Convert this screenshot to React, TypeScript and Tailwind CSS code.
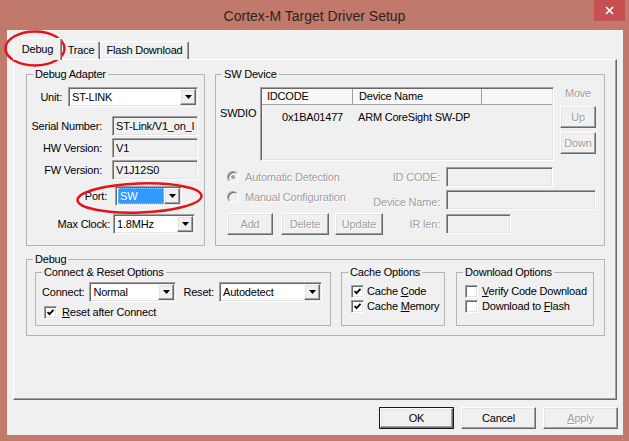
import React from 'react';

const sunken =
  'border border-t-[#a0a0a0] border-l-[#a0a0a0] border-b-white border-r-white shadow-[inset_1px_1px_0_#696969,inset_-1px_-1px_0_#e3e3e3]';
const raised =
  'border border-t-white border-l-white border-b-[#696969] border-r-[#696969] shadow-[inset_-1px_-1px_0_#a0a0a0,inset_1px_1px_0_#e3e3e3]';
const dim = 'text-[#a0a0a0] [text-shadow:1px_1px_0_#fff]';
const group = 'border border-[#b4b4b4] m-0 p-0 min-w-0';
const legend = 'ml-[6px] px-[2px] leading-[13px]';

function Arrow() {
  return (
    <svg width="7" height="4" viewBox="0 0 7 4">
      <path d="M0 0h7L3.5 4z" fill="#000" />
    </svg>
  );
}

function Combo({ w, value, selected }: { w: string; value: string; selected?: boolean }) {
  return (
    <div className={`${sunken} ${w} flex h-[20px] bg-white p-[1px]`}>
      <div className="flex flex-1 items-center overflow-hidden pl-[1px]">
        {selected ? (
          <span className="flex h-full w-full items-center bg-[#3399ff] pl-[2px] text-white outline outline-1 outline-dotted outline-[#f0c060] -outline-offset-1">
            {value}
          </span>
        ) : (
          <span className="pl-[1px]">{value}</span>
        )}
      </div>
      <div className={`${raised} flex w-[16px] items-center justify-center bg-[#f0f0f0]`}>
        <Arrow />
      </div>
    </div>
  );
}

function Field({ w, value }: { w: string; value?: string }) {
  return (
    <div className={`${sunken} ${w} flex h-[20px] items-center overflow-hidden whitespace-nowrap bg-[#f0f0f0] pl-[3px]`}>
      {value}
    </div>
  );
}

function Button({ w, children, disabled, def }: { w: string; children: React.ReactNode; disabled?: boolean; def?: boolean }) {
  return (
    <div className={`${w} h-[22px] ${def ? 'border border-[#1a1a1a]' : ''}`}>
      <div className={`${raised} flex h-full w-full items-center justify-center bg-[#f0f0f0] ${disabled ? dim : ''}`}>
        {children}
      </div>
    </div>
  );
}

function Check({ on }: { on?: boolean }) {
  return (
    <div className={`${sunken} flex h-[13px] w-[13px] shrink-0 items-center justify-center bg-white`}>
      {on && (
        <svg width="9" height="9" viewBox="0 0 9 9">
          <path d="M1.5 4l2 2.2L7.5 1.8" stroke="#000" strokeWidth="1.8" fill="none" />
        </svg>
      )}
    </div>
  );
}

function Radio({ on, label }: { on?: boolean; label: string }) {
  return (
    <div className="flex items-center">
      <div className="flex h-[12px] w-[12px] items-center justify-center rounded-full border border-t-[#a0a0a0] border-l-[#a0a0a0] border-b-white border-r-white bg-[#f0f0f0] shadow-[inset_1px_1px_0_#696969]">
        {on && <div className="h-[4px] w-[4px] rounded-full bg-[#a0a0a0]" />}
      </div>
      <span className={`ml-[6px] ${dim}`}>{label}</span>
    </div>
  );
}

function Row({ label, lw, gap, children, mt }: { label: string; lw: string; gap: string; children: React.ReactNode; mt: string }) {
  return (
    <div className={`flex h-[20px] items-center ${mt}`}>
      <span className={`${lw} text-right`}>{label}</span>
      <div className={gap}>{children}</div>
    </div>
  );
}

export default function App() {
  return (
    <div className="relative flex h-[441px] w-[629px] flex-col bg-[#c1796b] font-['Liberation_Sans',Arial,sans-serif] text-[11px] tracking-[-0.2px] text-black">
      {/* title bar */}
      <div className="grid h-[30px] grid-cols-[1fr_auto_1fr]">
        <div />
        <div className="self-center pt-[2px] font-['Liberation_Sans',sans-serif] text-[14px] tracking-normal text-[#2e2420]">
          Cortex-M Target Driver Setup
        </div>
        <div className="flex justify-end pr-[4px]">
          <div className="flex h-[21px] w-[31px] items-center justify-center bg-[#c75050]">
            <svg width="9" height="9" viewBox="0 0 9 9">
              <path d="M1 1l7 7M8 1L1 8" stroke="#fff" strokeWidth="1.7" />
            </svg>
          </div>
        </div>
      </div>

      {/* client */}
      <div className="mb-[6px] ml-[7px] mr-[6px] flex flex-col bg-[#f0f0f0] pb-[6px] pl-[6px] pr-[5px] pt-[8px]">
        {/* tabs */}
        <div className="flex h-[21px] items-end">
          <div className="relative z-10 -mb-[1px] flex h-[22px] w-[49px] items-center justify-center rounded-t-[2px] border border-b-0 border-t-white border-l-white border-r-[#696969] bg-[#f0f0f0] pb-[1px] shadow-[inset_-1px_0_0_#a0a0a0]">
            Debug
          </div>
          <div className="flex h-[18px] w-[38px] items-center justify-center rounded-t-[2px] border border-b-0 border-t-white border-l-white border-r-[#696969] shadow-[inset_-1px_0_0_#a0a0a0]">
            Trace
          </div>
          <div className="flex h-[18px] w-[89px] items-center justify-center rounded-t-[2px] border border-b-0 border-t-white border-l-white border-r-[#696969] shadow-[inset_-1px_0_0_#a0a0a0]">
            Flash Download
          </div>
        </div>

        {/* tab panel */}
        <div className="mr-[1px] h-[341px] border border-t-white border-l-white border-b-[#696969] border-r-[#696969] pl-[12px] pt-[8px] shadow-[inset_-1px_-1px_0_#a0a0a0]">
          <div className="flex">
            <fieldset className={`${group} h-[178px] w-[179px]`}>
              <legend className={legend}>Debug Adapter</legend>
              <Row label="Unit:" lw="w-[35px]" gap="ml-[6px]" mt="mt-[6px]">
                <Combo w="w-[130px]" value="ST-LINK" />
              </Row>
              <Row label="Serial Number:" lw="w-[75px]" gap="ml-[10px]" mt="mt-[9px]">
                <Field w="w-[86px]" value="ST-Link/V1_on_I" />
              </Row>
              <Row label="HW Version:" lw="w-[75px]" gap="ml-[10px]" mt="mt-[2px]">
                <Field w="w-[86px]" value="V1" />
              </Row>
              <Row label="FW Version:" lw="w-[75px]" gap="ml-[10px]" mt="mt-[2px]">
                <Field w="w-[86px]" value="V1J12S0" />
              </Row>
              <Row label="Port:" lw="w-[80px]" gap="ml-[8px]" mt="mt-[6px]">
                <Combo w="w-[67px]" value="SW" selected />
              </Row>
              <Row label="Max Clock:" lw="w-[83px]" gap="ml-[3px]" mt="mt-[8px]">
                <Combo w="w-[82px]" value="1.8MHz" />
              </Row>
            </fieldset>

            <fieldset className={`${group} ml-[10px] h-[178px] w-[390px]`}>
              <legend className={legend}>SW Device</legend>
              <div className="mt-[6px] flex items-start">
                <span className="mt-[20px] w-[44px] pl-[4px] leading-[13px]">SWDIO</span>
                <div className={`${sunken} h-[74px] w-[294px] bg-[#f0f0f0] p-[1px]`}>
                  <div className="flex h-[16px] border-b border-[#a0a0a0] bg-[#f7f7f7]">
                    <div className="flex w-[91px] items-center border-r border-[#a0a0a0] pl-[5px]">IDCODE</div>
                    <div className="flex w-[129px] items-center border-r border-[#a0a0a0] pl-[6px]">Device Name</div>
                    <div className="flex-1" />
                  </div>
                  <div className="mt-[6px] flex leading-[13px]">
                    <div className="w-[91px] pl-[20px]">0x1BA01477</div>
                    <div className="pl-[5px]">ARM CoreSight SW-DP</div>
                  </div>
                </div>
                <div className="ml-[6px] flex w-[36px] flex-col items-center">
                  <span className={`leading-[13px] ${dim}`}>Move</span>
                  <div className="mt-[6px]">
                    <Button w="w-[36px]" disabled>Up</Button>
                  </div>
                  <div className="mt-[4px]">
                    <Button w="w-[36px]" disabled>Down</Button>
                  </div>
                </div>
              </div>

              <div className="mt-[6px] flex h-[20px] items-center">
                <div className="ml-[11px] flex w-[213px] items-center justify-between">
                  <Radio on label="Automatic Detection" />
                  <span className={dim}>ID CODE:</span>
                </div>
                <div className="ml-[6px]">
                  <Field w="w-[107px]" />
                </div>
              </div>
              <div className="mt-[3px] flex h-[20px] items-start">
                <div className="ml-[11px] flex w-[213px] items-start justify-between">
                  <div className="-mt-[1px]">
                    <Radio label="Manual Configuration" />
                  </div>
                  <span className={`mt-[4px] ${dim}`}>Device Name:</span>
                </div>
                <div className="ml-[6px]">
                  <Field w="w-[150px]" />
                </div>
              </div>
              <div className="mt-[3px] flex h-[22px] items-center">
                <div className="ml-[11px] flex w-[213px] items-center justify-between">
                  <div className="flex">
                    <Button w="w-[46px]" disabled>Add</Button>
                    <div className="ml-[8px]">
                      <Button w="w-[48px]" disabled>Delete</Button>
                    </div>
                    <div className="ml-[6px]">
                      <Button w="w-[48px]" disabled>Update</Button>
                    </div>
                  </div>
                  <span className={dim}>IR len:</span>
                </div>
                <div className="ml-[6px]">
                  <Field w="w-[65px]" />
                </div>
              </div>
            </fieldset>
          </div>

          <fieldset className={`${group} mt-[7px] h-[83px] w-[579px]`}>
            <legend className={legend}>Debug</legend>
            <div className="flex">
              <fieldset className={`${group} ml-[8px] h-[60px] w-[296px]`}>
                <legend className={legend}>Connect &amp; Reset Options</legend>
                <div className="mt-[3px] flex h-[20px] items-center">
                  <span className="ml-[6px]">Connect:</span>
                  <div className="ml-[5px]">
                    <Combo w="w-[87px]" value="Normal" />
                  </div>
                  <span className="ml-[7px]">Reset:</span>
                  <div className="ml-[5px]">
                    <Combo w="w-[103px]" value="Autodetect" />
                  </div>
                </div>
                <div className="mt-[4px] flex h-[13px] items-center">
                  <div className="ml-[8px]">
                    <Check on />
                  </div>
                  <span className="ml-[5px]">
                    <u>R</u>eset after Connect
                  </span>
                </div>
              </fieldset>

              <fieldset className={`${group} ml-[10px] h-[60px] w-[104px]`}>
                <legend className={legend}>Cache Options</legend>
                <div className="mt-[5px] flex h-[15px] items-center pl-[9px]">
                  <Check on />
                  <span className="ml-[3px]">
                    Cache <u>C</u>ode
                  </span>
                </div>
                <div className="flex h-[15px] items-center pl-[9px]">
                  <Check on />
                  <span className="ml-[3px]">
                    Cache <u>M</u>emory
                  </span>
                </div>
              </fieldset>

              <fieldset className={`${group} ml-[11px] h-[60px] w-[138px]`}>
                <legend className={legend}>Download Options</legend>
                <div className="mt-[5px] flex h-[15px] items-center pl-[8px]">
                  <Check />
                  <span className="ml-[4px]">
                    <u>V</u>erify Code Download
                  </span>
                </div>
                <div className="flex h-[15px] items-center pl-[8px]">
                  <Check />
                  <span className="ml-[4px]">
                    Download to <u>F</u>lash
                  </span>
                </div>
              </fieldset>
            </div>
          </fieldset>
        </div>

        {/* dialog buttons */}
        <div className="mt-[7px] flex justify-end gap-[7px]">
          <Button w="w-[75px]" def>OK</Button>
          <Button w="w-[75px]">Cancel</Button>
          <Button w="w-[75px]" disabled>
            <span>
              <u>A</u>pply
            </span>
          </Button>
        </div>
      </div>

      {/* red annotation rings */}
      <svg className="pointer-events-none absolute left-0 top-0" width="629" height="441">
        <ellipse cx="35" cy="48.5" rx="29.5" ry="17" fill="none" stroke="#e3141c" strokeWidth="2.5" />
        <ellipse cx="139.5" cy="198" rx="62" ry="14.5" fill="none" stroke="#e3141c" strokeWidth="2.5" transform="rotate(-2 139.5 198)" />
      </svg>
    </div>
  );
}
